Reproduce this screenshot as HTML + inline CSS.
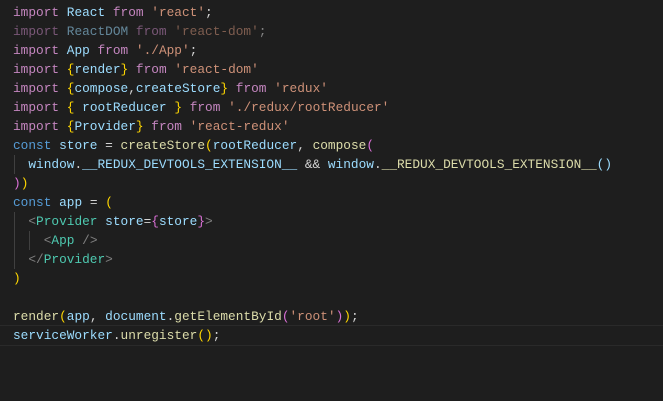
<!DOCTYPE html>
<html><head><style>
body{margin:0;background:#1e1e1e;width:663px;height:401px;overflow:hidden;position:relative}
pre{margin:0;position:absolute;left:13px;top:3px;font-family:"Liberation Mono",monospace;font-size:12.8px;line-height:19px;color:#d4d4d4}
.k{color:#c586c0}.v{color:#9cdcfe}.s{color:#ce9178}.y{color:#ffd700}.c{color:#569cd6}.f{color:#dcdcaa}.t{color:#4ec9b0}.p{color:#808080}.m{color:#da70d6}.d{opacity:.55}
.g{position:absolute;width:1px;background:#404040}
.cur{position:absolute;left:0;right:0;top:325px;height:19px;border-top:1px solid #2a2a2a;border-bottom:1px solid #2a2a2a}
</style></head><body>
<div class="cur"></div>
<div class="g" style="left:14px;top:155px;height:19px"></div>
<div class="g" style="left:14px;top:212px;height:57px"></div>
<div class="g" style="left:29px;top:231px;height:19px"></div>
<pre><span class="k">import</span> <span class="v">React</span> <span class="k">from</span> <span class="s">'react'</span>;
<span class="d"><span class="k">import</span> <span class="v">ReactDOM</span> <span class="k">from</span> <span class="s">'react-dom'</span>;</span>
<span class="k">import</span> <span class="v">App</span> <span class="k">from</span> <span class="s">'./App'</span>;
<span class="k">import</span> <span class="y">{</span><span class="v">render</span><span class="y">}</span> <span class="k">from</span> <span class="s">'react-dom'</span>
<span class="k">import</span> <span class="y">{</span><span class="v">compose</span>,<span class="v">createStore</span><span class="y">}</span> <span class="k">from</span> <span class="s">'redux'</span>
<span class="k">import</span> <span class="y">{</span> <span class="v">rootReducer</span> <span class="y">}</span> <span class="k">from</span> <span class="s">'./redux/rootReducer'</span>
<span class="k">import</span> <span class="y">{</span><span class="v">Provider</span><span class="y">}</span> <span class="k">from</span> <span class="s">'react-redux'</span>
<span class="c">const</span> <span class="v">store</span> = <span class="f">createStore</span><span class="y">(</span><span class="v">rootReducer</span>, <span class="f">compose</span><span class="m">(</span>
  <span class="v">window</span>.<span class="v">__REDUX_DEVTOOLS_EXTENSION__</span> &amp;&amp; <span class="v">window</span>.<span class="f">__REDUX_DEVTOOLS_EXTENSION__</span><span class="v">()</span>
<span class="m">)</span><span class="y">)</span>
<span class="c">const</span> <span class="v">app</span> = <span class="y">(</span>
  <span class="p">&lt;</span><span class="t">Provider</span> <span class="v">store</span>=<span class="m">{</span><span class="v">store</span><span class="m">}</span><span class="p">&gt;</span>
    <span class="p">&lt;</span><span class="t">App</span> <span class="p">/&gt;</span>
  <span class="p">&lt;/</span><span class="t">Provider</span><span class="p">&gt;</span>
<span class="y">)</span>

<span class="f">render</span><span class="y">(</span><span class="v">app</span>, <span class="v">document</span>.<span class="f">getElementById</span><span class="m">(</span><span class="s">'root'</span><span class="m">)</span><span class="y">)</span>;
<span class="v">serviceWorker</span>.<span class="f">unregister</span><span class="y">()</span>;</pre>
</body></html>
